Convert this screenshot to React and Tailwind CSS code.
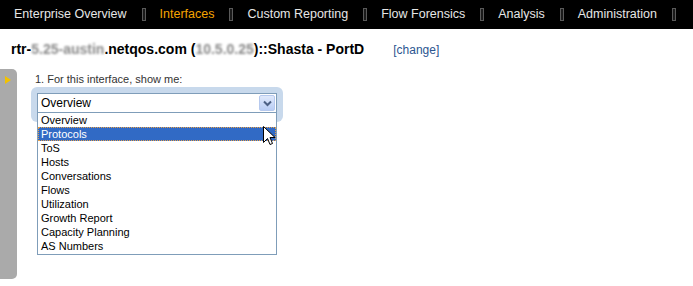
import React from 'react';

const navItems = ['Enterprise Overview', 'Interfaces', 'Custom Reporting', 'Flow Forensics', 'Analysis', 'Administration'];

const options = [
  'Overview',
  'Protocols',
  'ToS',
  'Hosts',
  'Conversations',
  'Flows',
  'Utilization',
  'Growth Report',
  'Capacity Planning',
  'AS Numbers',
];

const Separator = () => (
  <span className="ml-[15px] mr-[14px] inline-block h-[13px] w-[4px] shrink-0 border border-[#5a5a5a] bg-[#1a1a1a]" />
);

export default function App() {
  return (
    <div className="h-[286px] w-[693px] overflow-hidden bg-white font-['Liberation_Sans',Arial,sans-serif]">
      {/* Top nav */}
      <div className="flex h-[29px] items-center whitespace-nowrap bg-black pl-[14px] text-[12.5px] text-[#e6e6e6]">
        {navItems.map((item) => (
          <React.Fragment key={item}>
            <span className={item === 'Interfaces' ? 'shrink-0 text-[#f5a300]' : 'shrink-0'}>{item}</span>
            <Separator />
          </React.Fragment>
        ))}
      </div>

      {/* Title */}
      <div className="flex h-[40px] items-center whitespace-nowrap pl-[11px] pt-[1px]">
        <span className="text-[14px] font-bold text-black">
          rtr-<span className="text-[#8a8a8a] blur-[1px]">5.25-austin</span>.netqos.com (
          <span className="text-[#8a8a8a] blur-[1px]">10.5.0.25</span>)::Shasta - PortD
        </span>
        <a href="#" className="ml-[29px] text-[12px] text-[#2c5590]">[change]</a>
      </div>

      {/* Body */}
      <div className="flex">
        <div className="relative h-[210px] w-[17px] rounded-r-[5px] bg-[#aaaaaa]">
          <span className="absolute left-[5px] top-[7px] h-0 w-0 border-y-[4px] border-l-[6px] border-y-transparent border-l-[#f2c200]" />
        </div>

        <div className="ml-[14px] pt-[4px]">
          <div className="pl-[4px] text-[11px] leading-[13px] text-[#333]">1. For this interface, show me:</div>

          <div className="relative mt-[1px] h-[35px] w-[252px] rounded-[6px] bg-[#c8d9ec] pl-[6px] pt-[6px]">
            <div className="flex h-[20px] w-[240px] items-center justify-between border border-[#7f9db9] bg-white pl-[3px] pr-[1px]">
              <span className="text-[12px] leading-none text-black">Overview</span>
              <span className="flex h-[16px] w-[16px] items-center justify-center rounded-[2px] border border-[#b6c9ee] bg-gradient-to-b from-[#e0e9fb] to-[#b9cdf5]">
                <svg width="9" height="7" viewBox="0 0 9 7">
                  <path d="M1 1.5 L4.5 5 L8 1.5" fill="none" stroke="#4d6185" strokeWidth="2" />
                </svg>
              </span>
            </div>

            {/* Open dropdown list */}
            <div className="absolute left-[6px] top-[25px] w-[240px] border border-[#7f9db9] bg-white pb-[1px]">
              {options.map((opt) => (
                <div
                  key={opt}
                  className={
                    opt === 'Protocols'
                      ? 'h-[14px] border border-dotted border-[#e6a04a] bg-[#316ac5] pl-[2px] text-[11px] leading-[12px] text-white'
                      : 'h-[14px] pl-[3px] text-[11px] leading-[14px] text-black'
                  }
                >
                  {opt}
                </div>
              ))}
            </div>

            {/* Mouse cursor */}
            <svg className="absolute left-[232px] top-[39px]" width="13" height="21" viewBox="0 0 13 21">
              <path d="M0.5 0.5 L0.5 16.5 L4.5 12.5 L7 18.5 L9.5 17.5 L7 11.5 L12 11.5 Z" fill="white" stroke="black" strokeWidth="1" />
            </svg>
          </div>
        </div>
      </div>
    </div>
  );
}
